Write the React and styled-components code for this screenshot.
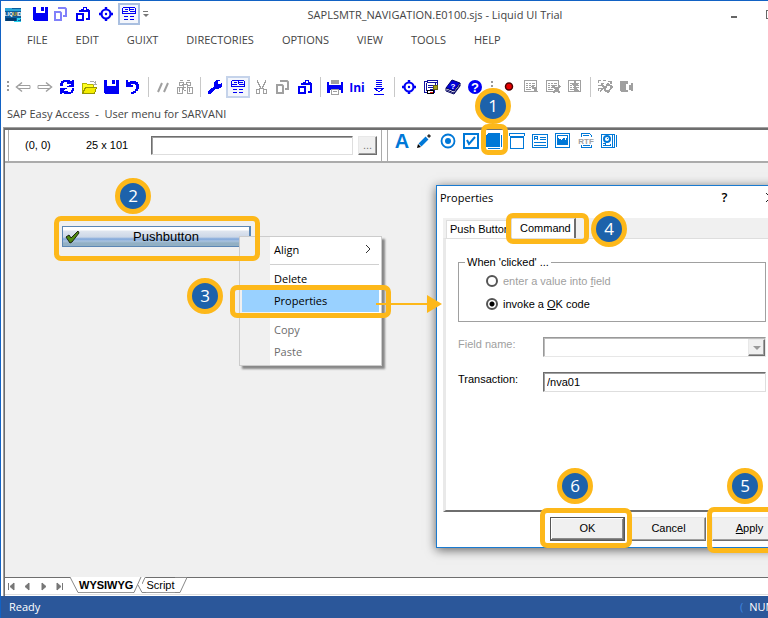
import React from "react";
import styled, { createGlobalStyle, css } from "styled-components";

const UI_FONT = `"Open Sans", "Noto Sans", sans-serif`;
const CLASSIC_FONT = `"Liberation Sans", Arial, sans-serif`;
const BLUE = "#0000f5";
const GRAY = "#a0a0a0";
const AZURE = "#0078d7";
const AMBER = "#fdb81a";

const GlobalStyle = createGlobalStyle`
  * {
    box-sizing: border-box;
  }

  body {
    margin: 0;
    background: #fff;
    font-family: ${UI_FONT};
    font-size: 11px;
    color: #444;
  }

  button, input, select {
    font: inherit;
    color: inherit;
    margin: 0;
  }
`;

/* ---------- icons ---------- */

const Svg = styled.svg`
  display: block;
  flex: none;
  overflow: visible;
`;

const Icon = ({ children, color = BLUE, smooth }) => (
  <Svg
    width="16"
    height="16"
    viewBox="0 0 16 16"
    fill="none"
    stroke={color}
    color={color}
    shapeRendering={smooth ? "auto" : "crispEdges"}
    aria-hidden="true"
  >
    {children}
  </Svg>
);

const IconText = styled.text`
  font-family: ${CLASSIC_FONT};
  font-size: ${(props) => props.$size}px;
  font-weight: 700;
  text-anchor: middle;
  stroke: none;
`;

const LogoIcon = () => (
  <Icon>
    <g stroke="none">
      <path fill="#0b5c9c" d="M0 2h16v13H0z" />
      <path fill="#2aa5d8" d="M0 2h7v1h9v2H0z" />
      <path fill="#053c70" d="M1 12h10v3H1z" />
      <path fill="#27d3ef" d="M12 12h4v1h-1v1h-2v1h3v1H9v-1h3z" />
    </g>
    <IconText $size={5} x="8" y="10" fill="#fff">
      LIQ<tspan fill={AMBER}>UI</tspan>D
    </IconText>
  </Icon>
);

const SaveIcon = () => (
  <Icon>
    <path
      fill="currentColor"
      stroke="none"
      d="M1 1h3v6h9V1h3v14H2v-1H1zM9 1h3v4H9z"
    />
  </Icon>
);

const CopyIcon = ({ color }) => (
  <Icon color={color} smooth>
    <path strokeWidth="2" d="M6 3V2h6l1 1v7h-3M2 6h5l1 1v7H2z" />
  </Icon>
);

const PasteIcon = () => (
  <Icon>
    <path strokeWidth="2" d="M5 6V5h2M12 5h2v8h-3M2 8h6v6H2z" />
    <path
      fill="currentColor"
      stroke="none"
      fillRule="evenodd"
      d="M8 1h4v2h2v3H6V3h2zM9 2v2h2V2z"
    />
  </Icon>
);

const GearIcon = () => (
  <Icon smooth>
    <circle cx="8" cy="8" r="4.500" strokeWidth="2.200" />
    <path strokeWidth="2.400" d="M8 1v3M8 12v3M1 8h3M12 8h3" />
    <circle cx="8" cy="8" r="1.200" fill="currentColor" stroke="none" />
  </Icon>
);

const FormIcon = () => (
  <Icon>
    <path d="M2 1.500h12M2 5.500h5M9 5.500h5M8 2v3M4 3.500h3M9 3.500h4M1.500 2v6M14.500 2v6" />
    <path d="M2 7.500h12" />
    <path d="M3 10.500h4M9 10.500h4M3 13.500h4M9 13.500h4" />
  </Icon>
);

const ArrowIcon = ({ flip }) => (
  <Icon color={GRAY} smooth>
    <g transform={flip ? "matrix(-1 0 0 1 16 0)" : undefined}>
      <path strokeWidth="1.500" d="M7 3.500L1.500 8L7 12.500" />
      <path d="M3 6.500h12v3H3" />
    </g>
  </Icon>
);

const RefreshIcon = () => (
  <Icon>
    <path
      fill="currentColor"
      stroke="none"
      d="M4 1h7v1h2V1h2v7H8V7h2V6h2V5H8V3H5v1H4v3H1V4h1V2h2z"
    />
    <path
      fill="currentColor"
      stroke="none"
      d="M1 9h7v1H6v1H5v1h4v1h3v-2h1V9h2v3h-1v2h-2v1H5v-1H3v1H1z"
    />
    <path stroke="#fff" d="M4 6l4-2M8 12l4-2" />
  </Icon>
);

const FolderIcon = () => (
  <Icon color="#8a8a40">
    <path fill="#ffff20" stroke="#b4b400" d="M1.500 14V4.500h4l1 1h6v3H5z" />
    <path fill="#f4ec00" stroke="#969600" d="M1.500 14.500l3-6h11l-2 6z" />
    <path stroke="#a9a9a9" d="M9 2.500h4M13 3.500h2M12 5.500h4M14.500 2v4" />
  </Icon>
);

const UndoIcon = () => (
  <Icon>
    <path
      fill="currentColor"
      stroke="none"
      d="M1 1h2v2h2V2h6v1h2v2h1v5h-1v2h-2v2H9v1H6v-2h2v-1h2v-2h1V6h-1V5H6v1h2v2H1z"
    />
  </Icon>
);

const SlashesIcon = () => (
  <Icon color={GRAY} smooth>
    <path strokeWidth="2" d="M3 13l4-9M9 13l4-9" />
  </Icon>
);

const FindIcon = () => (
  <Icon color={GRAY}>
    <path d="M3 1.500h3M10 1.500h3M2.500 3h4v3M13.500 3h-4v3M2.500 3v3M13.500 3v3M5 5.500h6" />
    <path d="M.5 8v6h5V8zM10.500 8v6h5V8zM2 6.500h4v4M14 6.500h-4v4M7 8.500h2M7 11.500h2M2.500 9v4M12.500 9v4" />
  </Icon>
);

const WrenchIcon = () => (
  <Icon>
    <path
      fill="currentColor"
      stroke="none"
      d="M9 1h4v1h-2v3h3V4h1v4h-1v1h-2v1H8v1H7v1H6v1H5v1H4v1H1v-3h1v-1h1v-1h1V9h2V8h1V3h1V2h1z"
    />
  </Icon>
);

const CutIcon = () => (
  <Icon color={GRAY}>
    <path d="M4.500 1v3M5.500 3v3M6.500 5v3M12.500 1v3M11.500 3v3M10.500 5v3M9.500 7v2M7.500 7v2M6 9.500h5M3.500 10v4h3v-4zM10.500 10v4h3v-4z" />
  </Icon>
);

const PrintIcon = () => (
  <Icon>
    <path fill="currentColor" stroke="none" d="M0 3h2v3h12V3h2v11h-2v-3H3v3H0z" />
    <path fill="#a0a0a0" stroke="none" d="M4 1h8v4H4z" />
    <path fill="#fff" stroke="#a0a0a0" d="M4.500 10.500h7v5h-7zM6 12.500h4" />
  </Icon>
);

const DownIcon = () => (
  <Icon>
    <path d="M5 1.500h6M5 3.500h6M5 5.500h6M5 7.500h6M3 9.500h10M4 10.500h2M10 10.500h2M5 11.500h2M9 11.500h2M7 12.500h2M3 15h10" />
  </Icon>
);

const ScriptIcon = () => (
  <Icon color="#1010a0">
    <path fill="#fff" d="M1.500 2.500h3v-1h10v9h-3v3h-10z" />
    <path d="M4 3.500h10M3.500 4v8M5 6.500h5M5 8.500h5M7 10.500h3M12.500 4v2" />
    <path fill="#a8a020" stroke="#606010" d="M10.500 6.500h4v4h-4z" />
    <path fill="#fff" stroke="#000" d="M4.500 11.500h6v3h-6z" />
    <path stroke="#e01010" d="M7 13.500h3" />
  </Icon>
);

const BookIcon = () => (
  <Icon color="#000060" smooth>
    <path fill="#0000d8" d="M1 9l6-8 8 3-6 8z" />
    <path fill="#fff" d="M1 9l8 3 6-8v3l-6 8-8-3z" />
    <path d="M2 11l7 3 6-8" />
    <IconText $size={8} x="8" y="10" fill="#fff">
      ?
    </IconText>
  </Icon>
);

const HelpIcon = () => (
  <Icon smooth>
    <circle cx="8" cy="8" r="7" fill="currentColor" stroke="none" />
    <IconText $size={13} x="8" y="13" fill="#fff">
      ?
    </IconText>
  </Icon>
);

const RecordIcon = () => (
  <Icon color="#500000" smooth>
    <circle cx="8" cy="7.500" r="3.500" fill="#e80000" strokeWidth="1.500" />
  </Icon>
);

const ListIcon = ({ mark }) => (
  <Icon color={GRAY}>
    <path d="M1.500 1.500h12v11h-12zM3 4.500h2M6 4.500h2M9 4.500h3M3 6.500h2M6 6.500h2M9 6.500h3M3 8.500h2M6 8.500h2M9 8.500h3M3 10.500h5" />
    {mark === "wand" && <path strokeWidth="2" d="M9 7l5 6M9 9h4" />}
    {mark === "cross" && <path strokeWidth="2" d="M8 7l7 7M15 7l-7 7" />}
    {mark === "move" && <path strokeWidth="2" d="M8 2v11M5 5h6M9 10l3 3" />}
  </Icon>
);

const SnapIcon = () => (
  <Icon color={GRAY}>
    <path d="M1 3.500V1.500h3M6 1.500h3M11 2.500h4M1 6.500h3v-2h3M1.500 12V9.500h3M3 12.500l4-4" />
    <path
      strokeWidth="2"
      d="M5 6l3 3 3-4 4 3-4 5-4-3M8 12h5M13 4h2"
    />
  </Icon>
);

const SpeakerIcon = () => (
  <Icon color={GRAY}>
    <path
      fill="currentColor"
      stroke="none"
      d="M1 2h8v3H7v6h2v2H2v-1H1zM14 4v8h-2v-1h-2V6h2V4z"
    />
  </Icon>
);

const LetterIcon = () => (
  <Icon color={AZURE}>
    <IconText
      $size={20}
      x="8"
      y="15"
      fill="currentColor"
    >
      A
    </IconText>
  </Icon>
);

const PenIcon = () => (
  <Icon color={AZURE} smooth>
    <path strokeWidth="4" d="M3 12l7-7" />
    <path stroke="#333" strokeWidth="3" d="M11 4l2-2" />
    <path fill="#000" stroke="none" d="M0 15l1-4 3 3z" />
    <path stroke="#fff" d="M9 3l3 3" />
  </Icon>
);

const RadioIcon = () => (
  <Icon color={AZURE} smooth>
    <circle cx="8" cy="8" r="6.500" strokeWidth="1.800" />
    <circle cx="8" cy="8" r="3" fill="currentColor" stroke="none" />
  </Icon>
);

const CheckIcon = () => (
  <Icon color={AZURE}>
    <path strokeWidth="2" d="M1 1h14v14H1z" />
    <path strokeWidth="2" d="M4 7l2 4 6-7" shapeRendering="auto" />
  </Icon>
);

const ButtonIcon = () => (
  <Icon color={AZURE}>
    <path d="M2 .5h12M15.500 2v12M2 15.500h12M.5 2v12" />
    <path fill="currentColor" stroke="none" d="M1 1h13v13H1z" />
  </Icon>
);

const GroupIcon = () => (
  <Icon color={AZURE}>
    <path d="M.5 3V.5h15V3M1.500 3v12h13V3" />
    <path strokeWidth="2" d="M1 4h14" />
  </Icon>
);

const TextIcon = () => (
  <Icon color={AZURE}>
    <path d="M.5 1.500h15v13H.5zM2.500 7V3.500h3V7M3 5.500h2M8 4.500h6M8 6.500h6M2 9.500h12M2 12.500h12" />
  </Icon>
);

const ImageIcon = () => (
  <Icon color={AZURE}>
    <path d="M.5.500h14v14H.5zM2 2.500h11M2.500 3v9M12.500 3v9" />
    <path
      fill="currentColor"
      stroke="none"
      d="M2 5h2v1h2v1h1V6h1V5h2v2h1V5h2v6h-1v1H3v-1H2z"
    />
  </Icon>
);

const RtfIcon = () => (
  <Icon color={AZURE}>
    <path d="M3.500 4V.5h8l2 2V4M3.500 12v2.500h10V12M5 2.500h6M5 12.500h7" />
    <IconText $size={8} x="8" y="11" fill={GRAY}>
      RTF
    </IconText>
  </Icon>
);

const BadgeIcon = () => (
  <Icon color={AZURE}>
    <path d="M.5 1.500h11v13H.5zM13.500 1v14M15.500 2v12M11 1.500h3M11 14.500h3" />
    <circle cx="6" cy="6" r="3" strokeWidth="2" shapeRendering="auto" />
    <path d="M6 5.500h1M2 10.500h2v2h5v-2M2 12.500h8" />
  </Icon>
);

const TickIcon = () => (
  <Icon color="#1c2410" smooth>
    <path fill="#4f8a10" d="M1 8l3-2 2 3 7-7 1 2-7 9-2 1z" />
  </Icon>
);

/* ---------- window frame ---------- */

const Window = styled.div`
  position: relative;
  display: flex;
  flex-direction: column;
  min-height: 100vh;
  overflow: hidden;
  border-top: 1px solid #1262c4;
  border-left: 1px solid #1262c4;
  background: #fff;
`;

const TitleBar = styled.header`
  display: flex;
  align-items: center;
  height: 27px;
  padding-left: 4px;
`;

const QuickBar = styled.div`
  display: flex;
  align-items: center;
  width: 146px;
  height: 26px;
  padding-bottom: 2px;
`;

const IconButton = styled.button`
  display: flex;
  flex: none;
  align-items: center;
  justify-content: center;
  width: ${(props) => props.$width || 22}px;
  height: 22px;
  padding: 0;
  border: 0;
  background: none;

  ${(props) =>
    props.$active &&
    css`
      background: #f3f6fc;
      border: 2px solid ${props.$active};
    `}
`;

const LogoButton = styled(IconButton)`
  margin-right: 9px;
`;

const MoreMark = styled.span`
  width: 5px;
  margin-left: 3px;
  border-top: 1px solid #777;

  &::after {
    content: "";
    display: block;
    margin-top: 2px;
    border: 3px solid transparent;
    border-top-color: #777;
    border-bottom: 0;
  }
`;

const Title = styled.h1`
  flex: 1;
  margin: 0;
  font-size: 11px;
  font-weight: 400;
  text-align: center;
  white-space: nowrap;
`;

const WindowControls = styled.div`
  display: flex;
  flex: none;
  width: 49px;
  overflow: hidden;
`;

const MinimizeMark = styled.span`
  width: 6px;
  height: 2px;
  margin-top: 5px;
  background: #666;
`;

const MaximizeMark = styled.span`
  width: 10px;
  height: 9px;
  border: 1px solid #666;
`;

const MenuBar = styled.nav`
  display: flex;
  align-items: center;
  gap: 28px;
  height: 22px;
  padding-left: 26px;
`;

const MenuLink = styled.a`
  color: #444;
  text-decoration: none;
`;

const ToolBar = styled.div`
  display: flex;
  align-items: center;
  height: 28px;
  margin-top: 23px;
  padding-left: 3px;
`;

const Separator = styled.span`
  flex: none;
  width: 1px;
  height: 20px;
  margin: 0 3px 0 4px;
  background: #c8c8c8;
`;

const Grip = styled.span`
  flex: none;
  width: 2px;
  height: 12px;
  margin: 0 ${(props) => props.$gap || 3}px;
  background: repeating-linear-gradient(#999 0 2px, transparent 2px 4px);
`;

const IniLabel = styled.span`
  font-size: 12px;
  font-weight: 700;
  color: ${BLUE};
`;

const Caption = styled.p`
  height: 26px;
  margin: 0;
  padding-left: 6px;
  line-height: 26px;
  white-space: pre;
`;

const Frame = styled.main`
  display: flex;
  flex: 1;
  margin-left: 2px;
  border-top: 1px solid ${GRAY};
  border-left: 1px solid ${GRAY};
`;

const FrameInner = styled.div`
  display: flex;
  flex: 1;
  flex-direction: column;
  min-width: 0;
  border-top: 2px solid #6e6e6e;
  border-left: 1px solid #6e6e6e;
`;

/* ---------- element bar ---------- */

const ElementBar = styled.div`
  display: flex;
  height: 33px;
  padding-left: 3px;
  border-bottom: 2px solid #ababab;
  font-family: ${CLASSIC_FONT};
  color: #000;
`;

const PositionPane = styled.div`
  display: flex;
  align-items: center;
  padding: 0 4px 1px 16px;
  border-left: 1px solid #ababab;
  border-right: 1px solid #ababab;
`;

const Readout = styled.span`
  width: ${(props) => props.$width}px;
`;

const sunken = css`
  border: 1px solid;
  border-color: #6e6e6e #dedede #dedede #6e6e6e;
  border-radius: 0;
  background: #fff;
  box-shadow: inset 1px 1px 0 #a0a0a0;
  outline: 0;
`;

const ValueInput = styled.input`
  ${sunken}
  width: 202px;
  height: 19px;
`;

const raised = css`
  border: 1px solid;
  border-color: #e8e8e8 #6e6e6e #6e6e6e #e8e8e8;
  background: #f0f0f0;
  box-shadow: inset -1px -1px 0 #a0a0a0;
`;

const BrowseButton = styled.button`
  ${raised}
  width: 19px;
  height: 19px;
  margin-left: 5px;
  padding: 0;
  line-height: 12px;
  color: #777;
`;

const Palette = styled.div`
  display: flex;
  align-items: flex-start;
  gap: 1px;
  margin-left: 5px;
  padding-left: 3px;
  border-left: 1px solid #ababab;
`;

/* ---------- design canvas ---------- */

const Canvas = styled.section`
  position: relative;
  flex: 1;
  min-height: 390px;
  overflow: hidden;
  background: #f0f0f0;
`;

const PushButton = styled.button`
  position: absolute;
  left: 57px;
  top: 63px;
  display: flex;
  align-items: center;
  width: 189px;
  height: 21px;
  padding: 0 2px;
  border: 1px solid #5b86b4;
  border-right-width: 2px;
  background: linear-gradient(
    #fff 0 3px,
    #dfe5ef 4px,
    #ccd7e7 10px,
    #7fa6da 12px,
    #a9c3e0 14px,
    #92b0c4 16px
  );
  font-family: ${CLASSIC_FONT};
  font-size: 13px;
  color: #000;

  span {
    flex: 1;
    padding-left: 4px;
  }
`;

const ContextMenu = styled.ul`
  position: absolute;
  left: 234px;
  top: 73px;
  width: 143px;
  margin: 0;
  padding: 2px;
  border: 1px solid #ccc;
  background: linear-gradient(90deg, #f0f0f0 30px, #fff 30px);
  box-shadow: 3px 3px 2px #888;
  list-style: none;
  color: #000;
`;

const MenuItem = styled.li`
  display: flex;
  align-items: center;
  justify-content: space-between;
  height: 22px;
  padding: 0 8px 2px 32px;
  color: ${(props) => (props.$disabled ? "#6d6d6d" : "#000")};
  background: ${(props) => (props.$selected ? "#99d1ff" : "none")};
`;

const MenuDivider = styled.li`
  height: 1px;
  margin: 3px 0 3px 28px;
  background: #d0d0d0;
`;

const Dialog = styled.form`
  position: absolute;
  left: 431px;
  top: 22px;
  display: flex;
  flex-direction: column;
  width: 358px;
  height: 363px;
  border: 1px solid #1a7ad0;
  background: #fff;
  box-shadow: 0 2px 10px rgba(0, 0, 0, 0.6);
  font-family: ${CLASSIC_FONT};
  color: #000;
`;

const DialogTitle = styled.div`
  display: flex;
  align-items: center;
  height: 24px;
  margin-bottom: 8px;
  padding: 0 0 2px 3px;
  font-family: ${UI_FONT};

  h2 {
    flex: 1;
    margin: 0;
    font-size: 11px;
    font-weight: 400;
  }
`;

const HelpMark = styled.span`
  font-size: 13px;
  font-weight: 600;
`;

const TabStrip = styled.div`
  display: flex;
  align-items: flex-end;
  height: 20px;
  margin: 0 6px;
  padding-left: 3px;
  background: #f0f0f0;
`;

const Tab = styled.button`
  flex: none;
  width: 65px;
  height: ${(props) => (props.$current ? 20 : 18)}px;
  padding: 0 0 1px ${(props) => (props.$current ? 8 : 3)}px;
  border: 1px solid #dedede;
  border-bottom: 0;
  background: #fff;
  text-align: left;
  white-space: nowrap;

  ${(props) =>
    props.$current &&
    css`
      border-right: 2px solid #6e6e6e;
    `}
`;

const Pane = styled.div`
  flex: 1;
  margin: 0 6px;
  padding: 16px 20px 0 12px;
  border: 1px solid #dedede;
  border-left: 3px solid #e9e9e9;
  border-bottom: 2px solid #6e6e6e;
`;

const OptionGroup = styled.fieldset`
  height: 67px;
  margin: 0 0 15px;
  padding: 5px 0 0 27px;
  border: 1px solid ${GRAY};

  legend {
    margin-left: -21px;
    padding: 0 2px;
    line-height: 14px;
  }
`;

const OptionRow = styled.label`
  display: flex;
  align-items: center;
  gap: 5px;
  height: 14px;
  margin-bottom: 9px;
  color: ${(props) => (props.$disabled ? GRAY : "#000")};
`;

const Radio = styled.input`
  appearance: none;
  width: 12px;
  height: 12px;
  border: 2px solid #555;
  border-radius: 50%;
  background: #fff;

  &:checked {
    background: radial-gradient(#000 2px, #fff 3px);
  }
`;

const FieldRow = styled.div`
  display: flex;
  align-items: flex-start;
  margin-bottom: 15px;
`;

const FieldLabel = styled.label`
  width: 85px;
  line-height: 14px;
  color: ${(props) => (props.$disabled ? GRAY : "#000")};
`;

const FieldSelect = styled.select`
  ${sunken}
  appearance: none;
  width: 100%;
  height: 20px;
`;

const SelectBox = styled.div`
  position: relative;
  display: flex;
  flex: 1;
`;

const DropArrow = styled.span`
  ${raised}
  position: absolute;
  right: 1px;
  top: 2px;
  display: flex;
  align-items: center;
  justify-content: center;
  width: 17px;
  height: 17px;
  pointer-events: none;

  &::after {
    content: "";
    border: 4px solid transparent;
    border-top-color: #999;
    border-bottom: 0;
  }
`;

const FieldInput = styled.input`
  ${sunken}
  flex: 1;
  min-width: 0;
  height: 20px;
  padding: 0 3px;
`;

const DialogFooter = styled.div`
  display: flex;
  justify-content: flex-end;
  gap: 6px;
  padding: 5px 6px 6px;
`;

const DialogButton = styled.button`
  ${raised}
  width: 75px;
  height: 24px;
  padding: 0 0 2px;

  ${(props) =>
    props.$primary &&
    css`
      border-color: #555;
      box-shadow: inset -1px -1px 0 #6e6e6e, inset 1px 1px 0 #fff,
        inset -2px -2px 0 #8a8a8a;
    `}
`;

/* ---------- sheet tabs and status ---------- */

const SheetBar = styled.div`
  display: flex;
  height: 18px;
  margin-bottom: 1px;
  border-bottom: 1px solid #dedede;
  font-family: ${CLASSIC_FONT};
  color: #000;
`;

const SheetNav = styled.div`
  display: flex;
  width: 65px;
  border-top: 1px solid #6e6e6e;
`;

const SheetNavButton = styled.button`
  display: flex;
  width: 16px;
  padding: 0;
  border: 0;
  background: none;
`;

const SheetTab = styled.button`
  display: flex;
  align-self: flex-start;
  height: 16px;
  padding: 0;
  border: 0;
  background: none;
  line-height: 15px;
  font-weight: ${(props) => (props.$current ? 700 : 400)};

  span {
    align-self: stretch;
    border-top: 1px solid ${(props) => (props.$current ? "#fff" : "#6e6e6e")};
    border-bottom: 1px solid #999;
  }
`;

const SheetRest = styled.div`
  flex: 1;
  border-top: 1px solid #6e6e6e;
`;

const StatusBar = styled.footer`
  display: flex;
  align-items: center;
  justify-content: space-between;
  height: 22px;
  padding: 0 0 1px 8px;
  background: #2b579a;
  color: #fff;
`;

const StatusKeys = styled.span`
  display: flex;
  gap: 6px;
  width: 28px;

  i {
    color: #3f86e0;
    font-style: normal;
  }
`;

/* ---------- callouts ---------- */

const CalloutLayer = styled.div`
  position: absolute;
  inset: -1px 0 0 -1px;
  pointer-events: none;
`;

const Badge = styled.span`
  position: absolute;
  left: ${(props) => props.$x}px;
  top: ${(props) => props.$y}px;
  width: 36px;
  height: 36px;
  border: 5px solid ${AMBER};
  border-radius: 50%;
  background: #1d62ab;
  font-size: 17px;
  line-height: 25px;
  text-align: center;
  color: #fff;
`;

const Highlight = styled.span`
  position: absolute;
  left: ${(props) => props.$x}px;
  top: ${(props) => props.$y}px;
  width: ${(props) => props.$w}px;
  height: ${(props) => props.$h}px;
  border: 5px solid ${AMBER};
  border-radius: 7px;
`;

const Pointer = styled.svg`
  position: absolute;
  left: 376px;
  top: 294px;
`;

const menus = [
  "FILE",
  "EDIT",
  "GUIXT",
  "DIRECTORIES",
  "OPTIONS",
  "VIEW",
  "TOOLS",
  "HELP",
];

const tools = [
  ["Back", <ArrowIcon />],
  ["Forward", <ArrowIcon flip />],
  ["Refresh", <RefreshIcon />],
  ["Open", <FolderIcon />],
  ["Save", <SaveIcon />],
  ["Undo", <UndoIcon />],
  null,
  ["Comment", <SlashesIcon />],
  ["Find", <FindIcon />],
  null,
  ["Settings", <WrenchIcon />],
  ["Form view", <FormIcon />, "#c5d3ea"],
  ["Cut", <CutIcon />],
  ["Copy", <CopyIcon color={GRAY} />],
  ["Paste", <PasteIcon />],
  null,
  ["Print", <PrintIcon />],
  ["Ini file", <IniLabel>Ini</IniLabel>],
  ["Download", <DownIcon />],
  null,
  ["Options", <GearIcon />],
  ["Script", <ScriptIcon />],
  ["Manual", <BookIcon />],
  ["Help", <HelpIcon />],
];

const recordTools = [
  ["Record", <RecordIcon />],
  ["Edit list", <ListIcon mark="wand" />],
  ["Delete list", <ListIcon mark="cross" />],
  ["Move list", <ListIcon mark="move" />],
  null,
  ["Snap", <SnapIcon />],
  ["Sound", <SpeakerIcon />],
];

const elements = [
  ["Text", <LetterIcon />],
  ["Edit", <PenIcon />],
  ["Radio button", <RadioIcon />],
  ["Checkbox", <CheckIcon />],
  ["Pushbutton", <ButtonIcon />],
  ["Group box", <GroupIcon />],
  ["Text box", <TextIcon />],
  ["Image", <ImageIcon />],
  ["Rich text", <RtfIcon />],
  ["Contact", <BadgeIcon />],
];

const badges = [
  [475, 88],
  [115, 178],
  [187, 278],
  [591, 211],
  [727, 468],
  [557, 468],
];

const highlights = [
  [481, 124, 27, 31],
  [54, 216, 206, 45],
  [230, 285, 161, 33],
  [506, 213, 83, 31],
  [707, 507, 90, 46],
  [540, 508, 92, 40],
];

const renderTool = (tool, index) =>
  tool ? (
    <IconButton
      key={index}
      type="button"
      aria-label={tool[0]}
      $active={tool[2]}
      $width={tool[2] && 24}
    >
      {tool[1]}
    </IconButton>
  ) : (
    <Separator key={index} />
  );

function ContextMenuList() {
  return (
    <ContextMenu>
      <MenuItem>
        Align
        <svg width="6" height="10" viewBox="0 0 6 10" fill="none" stroke="#333">
          <path d="M1 1l4 4-4 4" />
        </svg>
      </MenuItem>
      <MenuDivider />
      <MenuItem>Delete</MenuItem>
      <MenuItem $selected>Properties</MenuItem>
      <MenuDivider />
      <MenuItem $disabled>Copy</MenuItem>
      <MenuItem $disabled>Paste</MenuItem>
    </ContextMenu>
  );
}

function PropertiesDialog() {
  return (
    <Dialog onSubmit={(event) => event.preventDefault()}>
      <DialogTitle>
        <h2>Properties</h2>
        <IconButton type="button" aria-label="Help" $width={47}>
          <HelpMark>?</HelpMark>
        </IconButton>
        <IconButton type="button" aria-label="Close" $width={45}>
          <svg width="11" height="11" viewBox="0 0 11 11" stroke="#222">
            <path d="M1 1l9 9M10 1l-9 9" />
          </svg>
        </IconButton>
      </DialogTitle>
      <TabStrip>
        <Tab type="button">Push Button</Tab>
        <Tab type="button" $current>
          Command
        </Tab>
      </TabStrip>
      <Pane>
        <OptionGroup>
          <legend>When 'clicked' ...</legend>
          <OptionRow $disabled>
            <Radio type="radio" name="action" disabled />
            <span>
              enter a value into <u>f</u>ield
            </span>
          </OptionRow>
          <OptionRow>
            <Radio type="radio" name="action" defaultChecked />
            <span>
              invoke a <u>O</u>K code
            </span>
          </OptionRow>
        </OptionGroup>
        <FieldRow>
          <FieldLabel htmlFor="field-name" $disabled>
            Field name:
          </FieldLabel>
          <SelectBox>
            <FieldSelect id="field-name" disabled />
            <DropArrow />
          </SelectBox>
        </FieldRow>
        <FieldRow>
          <FieldLabel htmlFor="transaction">Transaction:</FieldLabel>
          <FieldInput id="transaction" type="text" defaultValue="/nva01" />
        </FieldRow>
      </Pane>
      <DialogFooter>
        <DialogButton $primary>OK</DialogButton>
        <DialogButton type="button">Cancel</DialogButton>
        <DialogButton type="button">
          <u>A</u>pply
        </DialogButton>
      </DialogFooter>
    </Dialog>
  );
}

function Sheets() {
  const arrows = [
    ["First", "M3.500 5v7M9 5v7l-4-3.500z"],
    ["Previous", "M8 5v7l-4-3.500z"],
    ["Next", "M5 5v7l4-3.500z"],
    ["Last", "M9.500 5v7M4 5v7l4-3.500z"],
  ];

  return (
    <SheetBar>
      <SheetNav>
        {arrows.map(([label, path]) => (
          <SheetNavButton key={label} type="button" aria-label={label}>
            <svg width="16" height="16" viewBox="0 0 16 16" fill="#777">
              <path d={path} stroke="#777" strokeWidth="1" />
            </svg>
          </SheetNavButton>
        ))}
      </SheetNav>
      <SheetTab type="button" $current>
        <svg width="9" height="16" viewBox="0 0 9 16" stroke="#888">
          <path d="M0 0l8 15.500h1" fill="none" />
        </svg>
        <span>WYSIWYG</span>
        <svg width="9" height="16" viewBox="0 0 9 16" stroke="#888">
          <path d="M0 15.500h1l7-15.500M5 8l4 7.500" fill="none" />
        </svg>
      </SheetTab>
      <SheetTab type="button">
        <svg width="4" height="16" viewBox="0 0 4 16" stroke="#888">
          <path d="M0 15.500h4M0 7l3-6.500h1" fill="none" />
        </svg>
        <span>Script</span>
        <svg width="12" height="16" viewBox="0 0 12 16" stroke="#888">
          <path d="M0 15.500h5l7-15M0 .5h12" fill="none" />
        </svg>
      </SheetTab>
      <SheetRest />
    </SheetBar>
  );
}

export default function App() {
  return (
    <>
      <GlobalStyle />
      <Window>
        <TitleBar>
          <QuickBar>
            <LogoButton type="button" aria-label="Liquid UI" $width={16}>
              <LogoIcon />
            </LogoButton>
            <IconButton type="button" aria-label="Save" $width={20}>
              <SaveIcon />
            </IconButton>
            <IconButton type="button" aria-label="Copy">
              <CopyIcon color="#8080fa" />
            </IconButton>
            <IconButton type="button" aria-label="Paste">
              <PasteIcon />
            </IconButton>
            <IconButton type="button" aria-label="Options" $width={24}>
              <GearIcon />
            </IconButton>
            <IconButton type="button" aria-label="Form view" $active="#a9bfe0">
              <FormIcon />
            </IconButton>
            <MoreMark />
          </QuickBar>
          <Title>SAPLSMTR_NAVIGATION.E0100.sjs - Liquid UI Trial</Title>
          <WindowControls>
            <IconButton type="button" aria-label="Minimize" $width={30}>
              <MinimizeMark />
            </IconButton>
            <IconButton type="button" aria-label="Maximize" $width={44}>
              <MaximizeMark />
            </IconButton>
          </WindowControls>
        </TitleBar>

        <MenuBar>
          {menus.map((menu) => (
            <MenuLink key={menu} href="#">
              {menu}
            </MenuLink>
          ))}
        </MenuBar>

        <ToolBar>
          <Grip />
          {tools.map(renderTool)}
          <Grip $gap={5} />
          {recordTools.map(renderTool)}
        </ToolBar>

        <Caption>{"SAP Easy Access  -  User menu for SARVANI"}</Caption>

        <Frame>
          <FrameInner>
            <ElementBar>
              <PositionPane>
                <Readout $width={61}>(0, 0)</Readout>
                <Readout $width={65}>25 x 101</Readout>
                <ValueInput type="text" aria-label="Value" />
                <BrowseButton type="button">...</BrowseButton>
              </PositionPane>
              <Palette>
                {elements.map(([label, icon]) => (
                  <IconButton key={label} type="button" aria-label={label}>
                    {icon}
                  </IconButton>
                ))}
              </Palette>
            </ElementBar>
            <Canvas>
              <PushButton type="button">
                <TickIcon />
                <span>Pushbutton</span>
              </PushButton>
              <ContextMenuList />
              <PropertiesDialog />
            </Canvas>
            <Sheets />
          </FrameInner>
        </Frame>

        <StatusBar>
          <span>Ready</span>
          <StatusKeys>
            <i>(</i>
            <span>NUM</span>
          </StatusKeys>
        </StatusBar>

        <CalloutLayer>
          {highlights.map(([x, y, w, h]) => (
            <Highlight key={`${x}-${y}`} $x={x} $y={y} $w={w} $h={h} />
          ))}
          {badges.map(([x, y], index) => (
            <Badge key={index} $x={x} $y={y}>
              {index + 1}
            </Badge>
          ))}
          <Pointer width="66" height="20" viewBox="0 0 66 20">
            <path d="M0 10h54" stroke={AMBER} strokeWidth="2" />
            <path d="M51 1l15 9-15 9z" fill={AMBER} />
          </Pointer>
        </CalloutLayer>
      </Window>
    </>
  );
}
